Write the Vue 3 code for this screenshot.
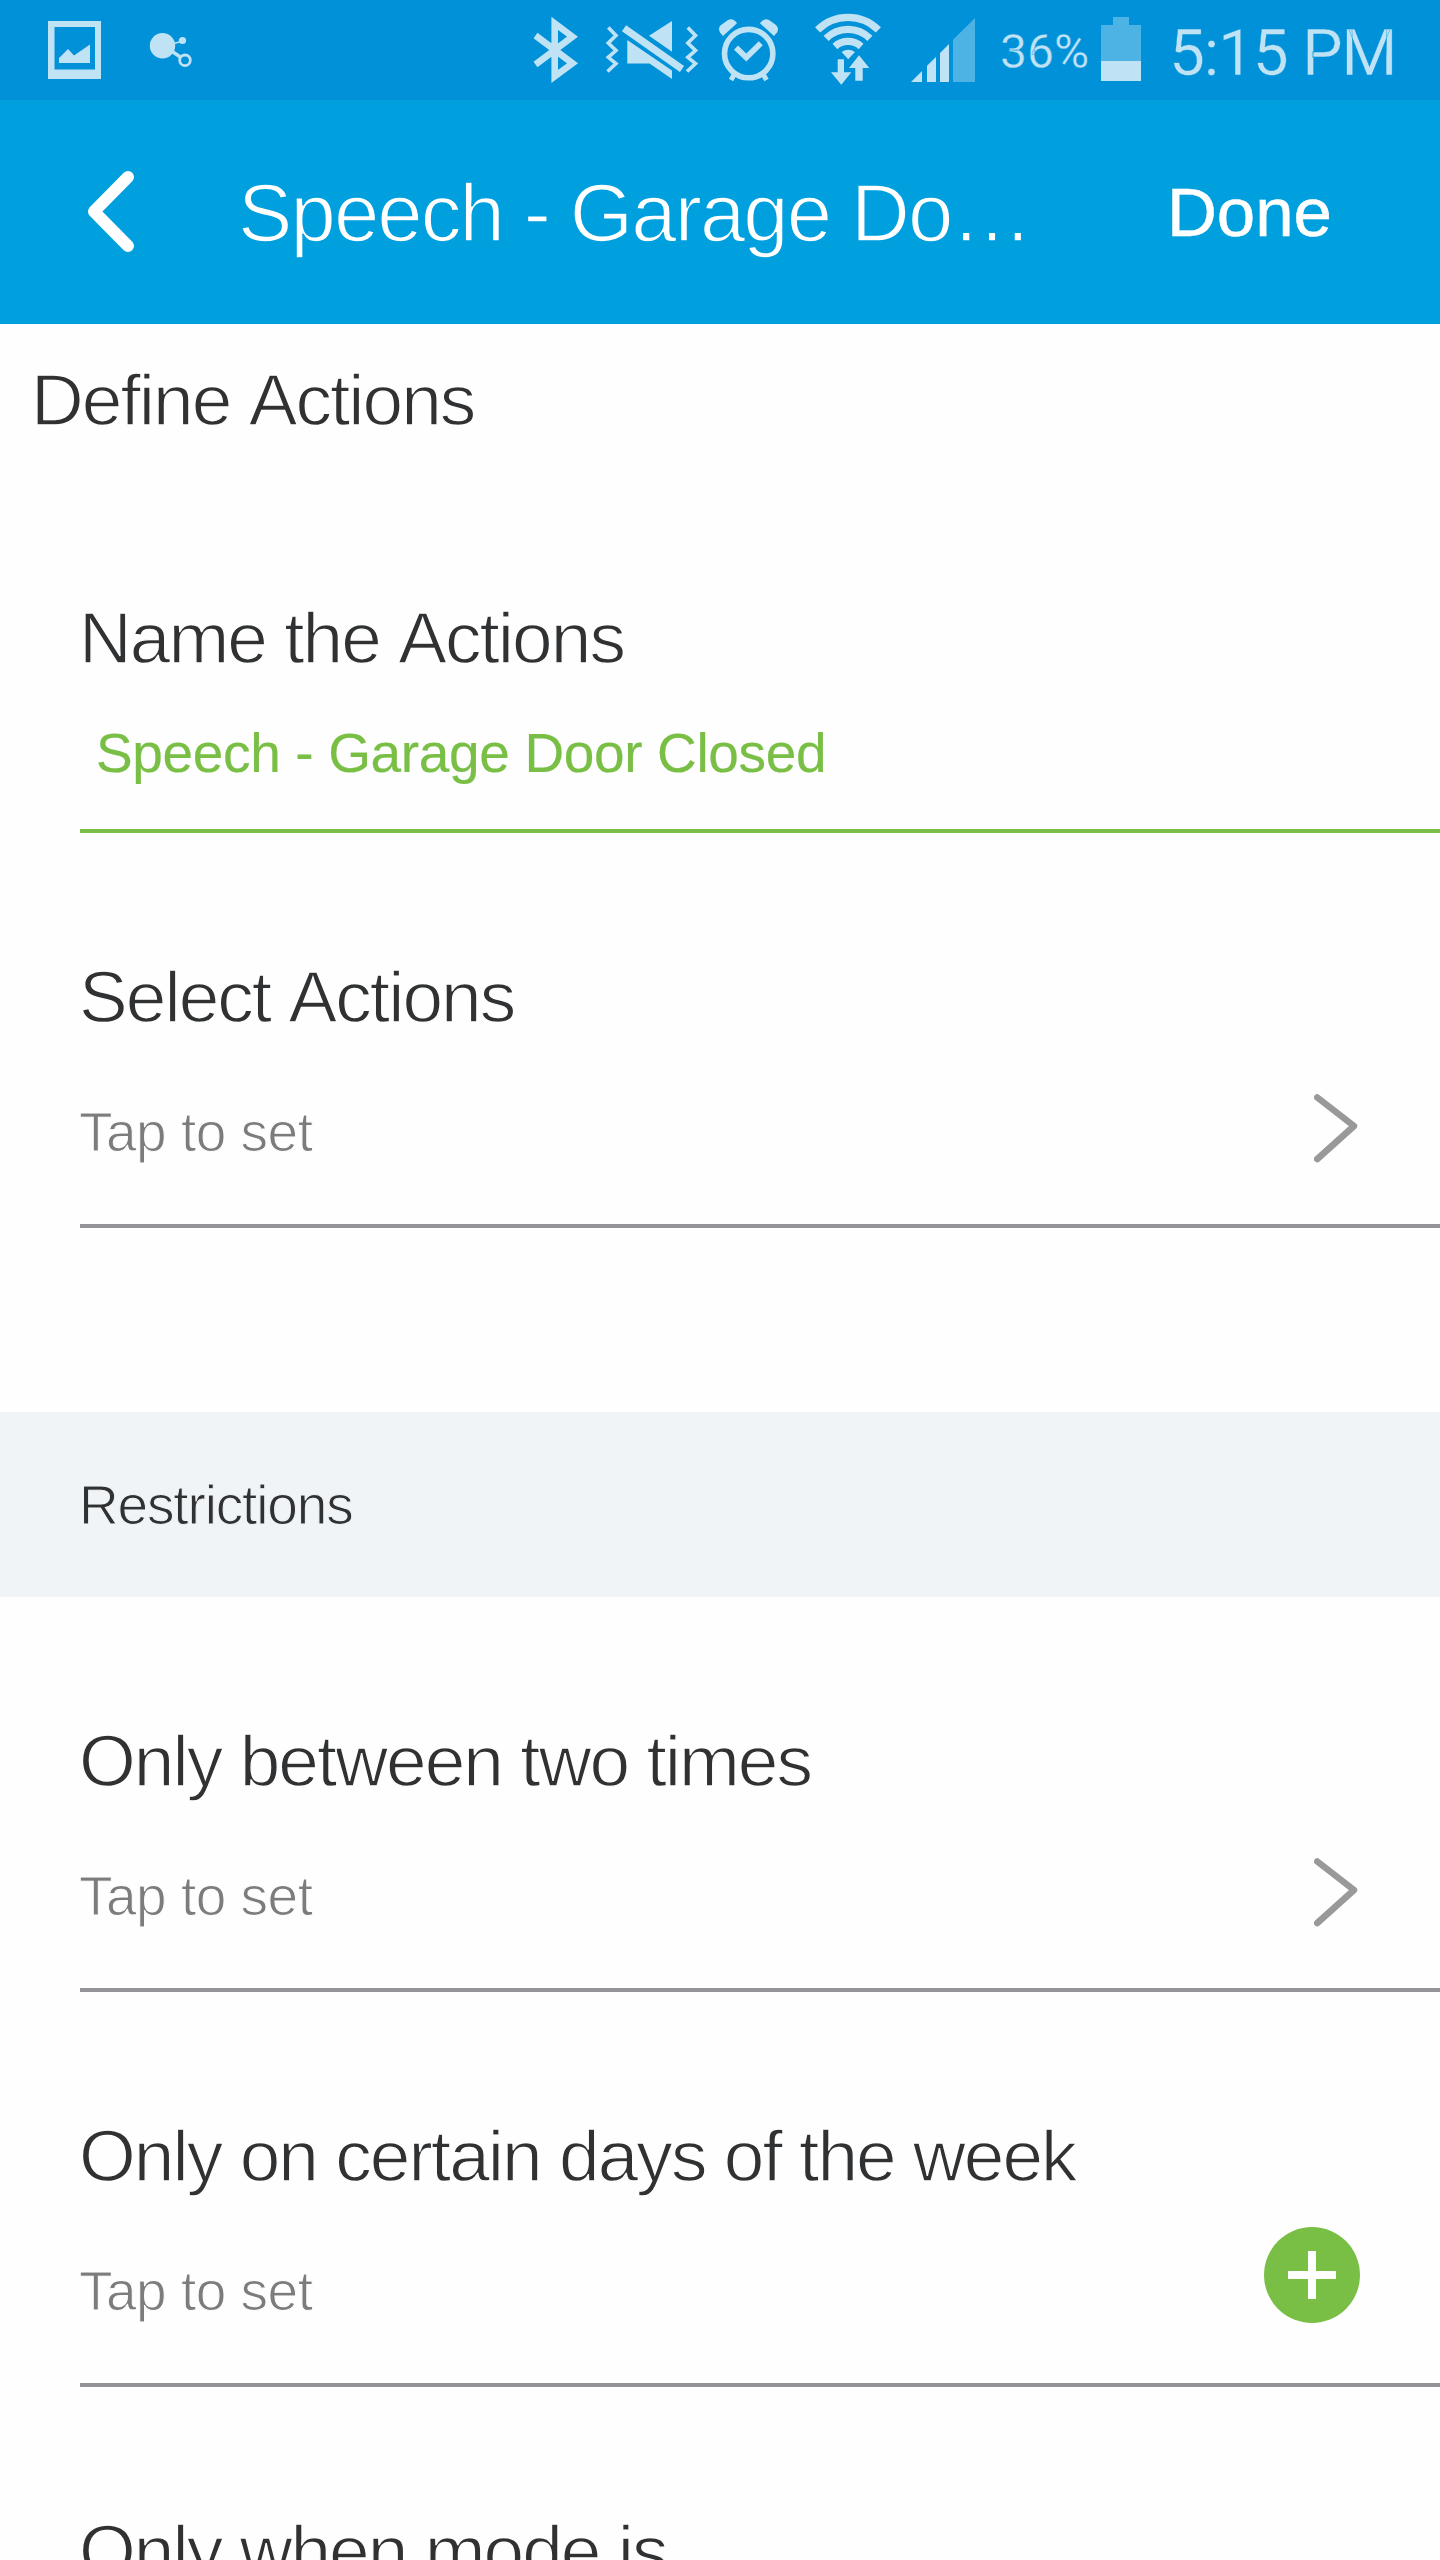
<script setup>
const selectAction = { title: 'Select Actions', hint: 'Tap to set', icon: 'chevron' }

const restrictions = [
  { title: 'Only between two times', hint: 'Tap to set', icon: 'chevron' },
  { title: 'Only on certain days of the week', hint: 'Tap to set', icon: 'plus' },
  { title: 'Only when mode is', hint: 'Tap to set', icon: 'chevron' },
]
</script>

<template>
  <div class="screen">
    <div class="status">
      <svg class="notif" width="160" height="100" viewBox="40 0 160 100">
        <path fill-rule="evenodd" d="M48 21H101V79H48ZM54.5 27V69.5H95V27Z" />
        <path d="M59 63V58L68 49L74 55.5L90 44.5V63Z" />
        <circle cx="162.5" cy="45.7" r="12.7" />
        <circle cx="182.5" cy="40.5" r="3.6" />
        <path class="line" stroke-width="1.6" d="M172 44L183 41" />
        <path class="line" stroke-width="3.4" d="M170 50L181 57.5" />
        <circle class="line" cx="185" cy="60.3" r="5.3" stroke-width="2.8" />
      </svg>

      <div class="system">
        <svg width="70" height="100" viewBox="530 0 70 100">
          <path class="line" stroke-width="6.6" d="M535.5 35.5L572.5 63.3L554.7 76.4V23.3L572.5 36.7L535.5 64.5" />
        </svg>
        <svg width="110" height="100" viewBox="600 0 110 100">
          <path class="line" stroke-width="3.6" d="M608.3 27.5L616 35.5L608.3 43L616 50.5L608.3 57.3L616 63.5L607.5 71.5" />
          <path class="line" stroke-width="3.6" d="M687.8 27.5L695.5 35.5L687.8 43L695.5 50.5L687.8 57.3L695.5 63.5L687 71.5" />
          <path d="M627.3 40V63.5H649.5L672 79V70.5Z" />
          <path d="M649 35.7L672 21V51.7Z" />
          <path class="line" stroke-width="7.3" d="M624 28.3L682 68.9" />
        </svg>
        <svg width="95" height="100" viewBox="710 0 95 100">
          <circle class="line" cx="748.7" cy="53.6" r="24.2" stroke-width="5.6" />
          <path class="line" stroke-width="5.8" d="M736 47.7L746.3 57.5L760.8 43.3" />
          <path d="M723 36L720 32.5Q717.5 28 721 25L728 20Q733 17.5 737 23.3Z" />
          <path d="M774 36L777 32.5Q779.5 28 776 25L769 20Q764 17.5 760 23.3Z" />
          <path class="line" stroke-width="5" d="M734.5 74L731 80M763 74L766.5 80" />
        </svg>
        <svg width="95" height="100" viewBox="805 0 95 100">
          <path class="line" stroke-width="7.2" d="M817.6 29.9A43 43 0 0 1 878.4 29.9M826.1 38.4A31 31 0 0 1 869.9 38.4M834.9 46.5A19.5 19.5 0 0 1 861.1 46.5" />
          <path d="M841.5 52Q848.2 47.5 855 52L848.2 59.3Z" />
          <path d="M837.7 59.3H844V72.3H851.3L841.3 84.7L831 72.3H837.7Z" />
          <path d="M859 55.3L869.3 68H862.7V80.7H855.3V68H849Z" />
        </svg>
        <svg width="100" height="100" viewBox="900 0 100 100">
          <path d="M911 82L922 71V82ZM927 82V65.7L936 57V82ZM940 82V53L949 44V82Z" />
          <path class="dim" d="M953 82V39.7L975 18V82Z" />
        </svg>
        <span class="percent">36%</span>
        <svg width="50" height="100" viewBox="1096 0 50 100">
          <path class="dim" d="M1113 17H1129V25H1141V61H1101V25H1113Z" />
          <path d="M1101 61H1141V81H1101Z" />
        </svg>
        <span class="time">5:15 PM</span>
      </div>
    </div>

    <header class="bar">
      <svg class="back" width="46" height="81" viewBox="0 0 46 81">
        <path d="M40 6L6 40.5L40 75" />
      </svg>
      <h1>Speech - Garage Do…</h1>
      <span class="done">Done</span>
    </header>

    <h2 class="title page">Define Actions</h2>

    <section class="row name">
      <h3 class="title">Name the Actions</h3>
      <div class="value">Speech - Garage Door Closed</div>
    </section>

    <section class="row">
      <h3 class="title">{{ selectAction.title }}</h3>
      <div class="hint">{{ selectAction.hint }}</div>
      <svg class="chevron" width="44" height="69" viewBox="0 0 44 69">
        <path d="M3.3 3.5L40 32L3.3 65" />
      </svg>
    </section>

    <div class="band">Restrictions</div>

    <section v-for="item in restrictions" :key="item.title" class="row">
      <h3 class="title">{{ item.title }}</h3>
      <div class="hint">{{ item.hint }}</div>
      <svg v-if="item.icon === 'chevron'" class="chevron" width="44" height="69" viewBox="0 0 44 69">
        <path d="M3.3 3.5L40 32L3.3 65" />
      </svg>
      <svg v-else class="plus" width="96" height="96" viewBox="0 0 96 96">
        <circle cx="48" cy="48" r="48" />
        <path d="M24 48H72M48 24V72" />
      </svg>
    </section>
  </div>
</template>

<style>
body {
  background: #fefefe;
}
</style>

<style scoped>
.screen {
  width: 1440px;
  height: 2560px;
  overflow: hidden;
  background: #fefefe;
  color: #2f3133;
  font-family: "Liberation Sans", Arial, sans-serif;
}

h1,
h2,
h3 {
  margin: 0;
  font-weight: 400;
}

svg {
  display: block;
  flex: none;
}

.status {
  display: flex;
  justify-content: space-between;
  height: 100px;
  padding-left: 40px;
  box-sizing: border-box;
  background: #0091d8;
  color: #bfe3f5;
  font-family: Roboto, sans-serif;
}

.status svg {
  fill: #bfe3f5;
}

.status .line {
  fill: none;
  stroke: #bfe3f5;
}

.status .dim {
  fill: #4db2e4;
}

.system {
  display: flex;
  width: 910px;
  white-space: nowrap;
}

.percent {
  width: 96px;
  font-size: 48px;
  line-height: 104px;
  -webkit-text-stroke: 0.4px #0091d8;
}

.time {
  padding-left: 23px;
  font-size: 64px;
  line-height: 107px;
  letter-spacing: -1.2px;
  -webkit-text-stroke: 0.4px #0091d8;
}

.bar {
  display: flex;
  height: 224px;
  padding-left: 88px;
  box-sizing: border-box;
  background: #00a0df;
  color: #fff;
  white-space: nowrap;
}

.back {
  margin-top: 71px;
}

.back path {
  fill: none;
  stroke: #fff;
  stroke-width: 12;
  stroke-linecap: round;
  stroke-linejoin: round;
}

.bar h1 {
  width: 929px;
  margin-left: 104px;
  padding-top: 63px;
  font-size: 81.5px;
  line-height: 100px;
  letter-spacing: -1.9px;
  -webkit-text-stroke: 1.6px #00a0df;
}

.done {
  padding-top: 63px;
  font-size: 69px;
  line-height: 100px;
  -webkit-text-stroke: 0.5px #fff;
}

.title {
  font-size: 73px;
  line-height: 80px;
  letter-spacing: -1.95px;
  font-kerning: none;
  white-space: nowrap;
  -webkit-text-stroke: 1.3px #fefefe;
}

.page {
  height: 209px;
  padding: 36px 0 0 31px;
}

.row {
  position: relative;
  height: 395px;
  margin-left: 80px;
  padding-top: 124px;
  box-sizing: border-box;
  border-bottom: 4px solid #929497;
}

.row .title {
  margin-left: -1px;
}

.name {
  height: 264px;
  padding-top: 29px;
  border-color: #79bf45;
}

.value {
  margin: 45px 0 0 16px;
  color: #79bf45;
  font-size: 55px;
  line-height: 60px;
  letter-spacing: -0.36px;
  -webkit-text-stroke: 0.2px #79bf45;
}

.hint {
  margin: 65px 0 0 -1px;
  color: #7c7c7c;
  font-size: 55px;
  line-height: 60px;
  letter-spacing: -0.5px;
  -webkit-text-stroke: 1px #fefefe;
}

.chevron {
  position: absolute;
  top: 261px;
  right: 82px;
}

.chevron path {
  fill: none;
  stroke: #999;
  stroke-width: 6.6;
  stroke-linecap: round;
  stroke-linejoin: round;
}

.plus {
  position: absolute;
  top: 235px;
  right: 80px;
}

.plus circle {
  fill: #79bf45;
}

.plus path {
  stroke: #fff;
  stroke-width: 8;
}

.band {
  height: 185px;
  margin-top: 184px;
  padding: 63px 0 0 79px;
  box-sizing: border-box;
  background: #f0f4f7;
  font-size: 55px;
  line-height: 60px;
  letter-spacing: -1.15px;
  -webkit-text-stroke: 1px #f0f4f7;
}
</style>
